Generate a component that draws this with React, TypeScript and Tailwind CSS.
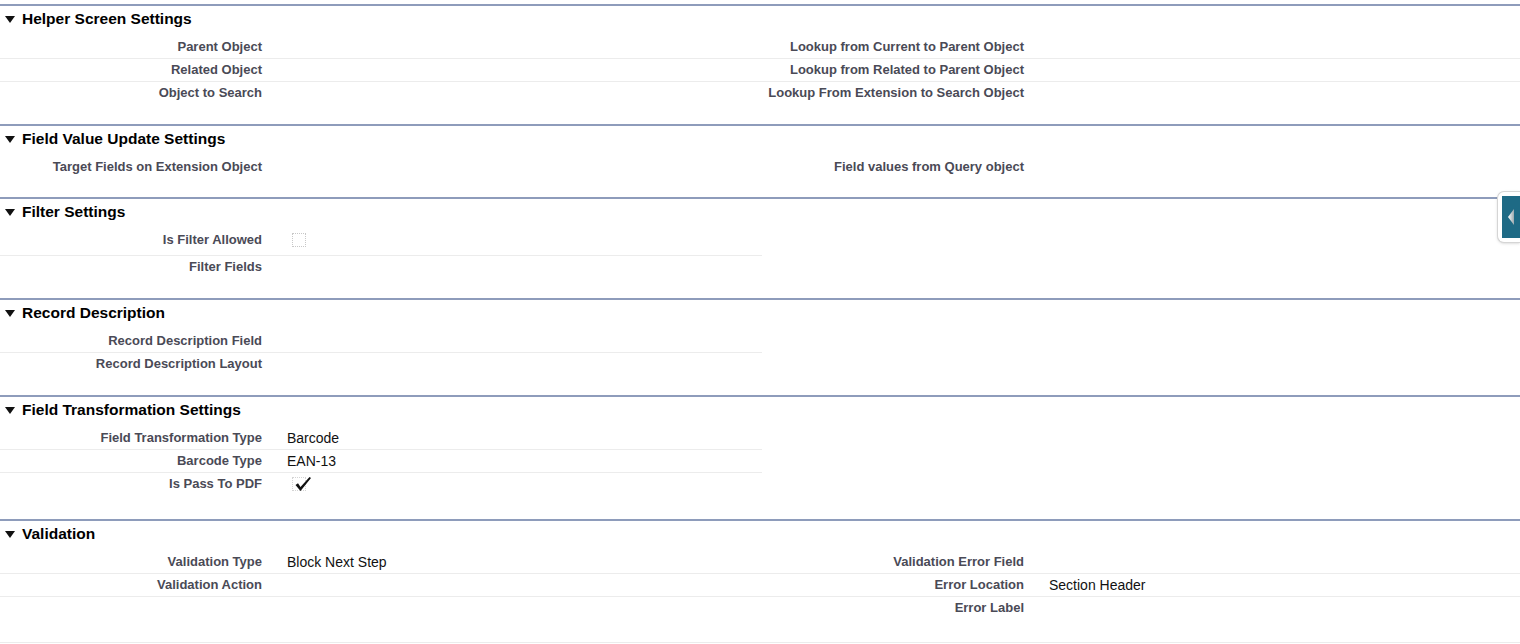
import React from "react";

type Field = { label: string; value?: React.ReactNode };
type Row = [Field, Field?];

const font = { fontFamily: '"Liberation Sans", Arial, sans-serif' };

function EmptyBox() {
    return <span className="mt-[4px] block w-[14px] h-[14px] border border-dotted border-[#c8c8c8]" />;
}

function CheckedBox() {
    return (
        <span className="relative mt-[4px] block w-[14px] h-[14px] border border-dotted border-[#d4d4d4]">
            <svg viewBox="0 0 18 18" className="absolute left-[1px] -top-[3px] w-[18px] h-[18px]">
                <path d="M1.5 10 L6.5 16 L17 3 L15.5 2 L6.5 12 L4 8.2 Z" fill="#111" />
            </svg>
        </span>
    );
}

function Label({ text }: { text: string }) {
    return (
        <div className="pr-[12px] text-right text-[13px] font-bold leading-[22px] text-[#4a4a56] whitespace-nowrap">
            {text}
        </div>
    );
}

function Value({ children }: { children?: React.ReactNode }) {
    return <div className="pl-[13px] text-[14px] leading-[22px] text-[#111]">{children}</div>;
}

function Section({
    title,
    rows,
    single = false,
    tallRows = [],
    tight = false,
}: {
    title: string;
    rows: Row[];
    single?: boolean;
    tallRows?: number[];
    tight?: boolean;
}) {
    return (
        <section className={`border-t-2 border-[#8e9cbb] ${tight ? "pb-[18px]" : "pb-[19px]"}`}>
            <div className="h-[30px] pt-[3px] pl-[5px] flex items-start gap-[7px]">
                <svg viewBox="0 0 10 7" className="mt-[7px] w-[10px] h-[7px]">
                    <path d="M0 0 H10 L5 7 Z" fill="#111" />
                </svg>
                <h3 className="text-[15.5px] font-bold leading-[20px] text-black">{title}</h3>
            </div>
            <div className={single ? "w-[762px]" : "w-full"}>
                {rows.map(([a, b], i) => (
                    <div
                        key={i}
                        className={`grid border-b ${
                            i === rows.length - 1 ? "border-transparent" : "border-[#ececec]"
                        } ${tallRows.includes(i) ? "h-[27px]" : "h-[23px]"} ${
                            single ? "grid-cols-[274px_1fr]" : "grid-cols-[274px_488px_274px_1fr]"
                        }`}
                    >
                        <Label text={a.label} />
                        <Value>{a.value}</Value>
                        {!single && (
                            <>
                                {b ? <Label text={b.label} /> : <div />}
                                <Value>{b?.value}</Value>
                            </>
                        )}
                    </div>
                ))}
            </div>
        </section>
    );
}

export default function App() {
    return (
        <div className="relative w-full min-h-[644px] bg-white pt-[4px]" style={font}>
            <Section
                title="Helper Screen Settings"
                rows={[
                    [{ label: "Parent Object" }, { label: "Lookup from Current to Parent Object" }],
                    [{ label: "Related Object" }, { label: "Lookup from Related to Parent Object" }],
                    [{ label: "Object to Search" }, { label: "Lookup From Extension to Search Object" }],
                ]}
            />
            <Section
                title="Field Value Update Settings"
                tight
                rows={[[{ label: "Target Fields on Extension Object" }, { label: "Field values from Query object" }]]}
            />
            <Section
                title="Filter Settings"
                single
                tallRows={[0]}
                rows={[
                    [{ label: "Is Filter Allowed", value: <span className="block pl-[5px]"><EmptyBox /></span> }],
                    [{ label: "Filter Fields" }],
                ]}
            />
            <Section
                title="Record Description"
                single
                rows={[[{ label: "Record Description Field" }], [{ label: "Record Description Layout" }]]}
            />
            <Section
                title="Field Transformation Settings"
                single
                tallRows={[2]}
                rows={[
                    [{ label: "Field Transformation Type", value: "Barcode" }],
                    [{ label: "Barcode Type", value: "EAN-13" }],
                    [{ label: "Is Pass To PDF", value: <span className="block pl-[5px]"><CheckedBox /></span> }],
                ]}
            />
            <Section
                title="Validation"
                rows={[
                    [{ label: "Validation Type", value: "Block Next Step" }, { label: "Validation Error Field" }],
                    [{ label: "Validation Action" }, { label: "Error Location", value: "Section Header" }],
                    [{ label: "" }, { label: "Error Label" }],
                ]}
            />
            <div className="mt-[3px] border-t border-[#ececec]" />

            {/* collapsed side panel tab */}
            <div className="absolute right-0 top-[191px] w-[23px] h-[52px] rounded-l-[7px] border border-r-0 border-[#d5d5d5] bg-white pl-[4px] py-[4px] shadow-sm">
                <div className="flex h-full items-center justify-center bg-[#1e6a85]">
                    <svg viewBox="0 0 6 16" className="w-[6px] h-[16px]">
                        <defs>
                            <linearGradient id="tri" x1="0" x2="1" y1="0" y2="0">
                                <stop offset="0" stopColor="#ffffff" />
                                <stop offset="1" stopColor="#9aa7ad" />
                            </linearGradient>
                        </defs>
                        <path d="M0 8 L6 0 V16 Z" fill="url(#tri)" />
                    </svg>
                </div>
            </div>
        </div>
    );
}
